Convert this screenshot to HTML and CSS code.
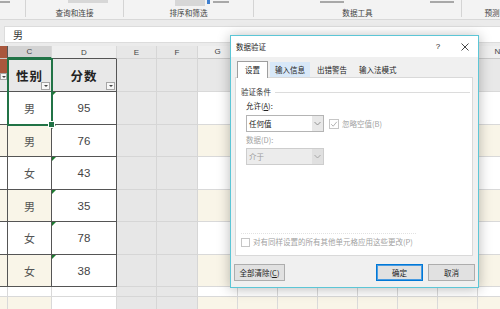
FILE: index.html
```html
<!DOCTYPE html>
<html lang="zh-CN">
<head>
    <meta charset="UTF-8">
    <meta name="viewport" content="width=device-width, initial-scale=1.0">
    <title>数据验证</title>
    <link rel="stylesheet" href="styles.css">
</head>
<body>
    <!-- ribbon, only the bottom edge is visible -->
    <div class="ribbon">
        <div class="group g0">
            <div class="tools"><span class="bar f0"></span></div>
        </div>
        <div class="group g1">
            <div class="tools"><span class="chip chip1"></span></div>
            <p class="glabel">查询和连接</p>
        </div>
        <div class="group g2">
            <div class="tools"><span class="chip chip2"></span><span class="adv-icon"></span><span class="bar f2"></span></div>
            <p class="glabel">排序和筛选</p>
        </div>
        <div class="group g3">
            <div class="tools"><span class="bar f3a"></span><span class="bar f3b"></span></div>
            <p class="glabel">数据工具</p>
        </div>
        <div class="group g4">
            <div class="tools"></div>
            <p class="glabel">预测</p>
        </div>
    </div>

    <div class="formula">
        <div class="fx-input">男</div>
    </div>

    <div class="sheet">
        <div class="row colhead">
            <div class="b"></div>
            <div class="c on">C</div>
            <div class="d">D</div>
            <div class="e">E</div>
            <div class="f">F</div>
            <div class="rest">
                <span>G</span><span></span><span></span><span></span><span></span><span></span><span></span><span>N</span>
            </div>
        </div>

        <div class="row th band-g">
            <div class="b t"><span class="flt bflt"></span></div>
            <div class="c t">性别<span class="flt"></span></div>
            <div class="d t">分数<span class="flt"></span></div>
            <div class="e"></div>
            <div class="f"></div>
            <div class="rest"></div>
        </div>

        <div class="row band-w h33">
            <div class="b t"></div>
            <div class="c t">男</div>
            <div class="d t tx">95</div>
            <div class="e"></div>
            <div class="f"></div>
            <div class="rest"></div>
        </div>
        <div class="row band-c h32">
            <div class="b t"></div>
            <div class="c t">男</div>
            <div class="d t tx">76</div>
            <div class="e"></div>
            <div class="f"></div>
            <div class="rest"></div>
        </div>
        <div class="row band-w h33">
            <div class="b t"></div>
            <div class="c t">女</div>
            <div class="d t tx">43</div>
            <div class="e"></div>
            <div class="f"></div>
            <div class="rest"></div>
        </div>
        <div class="row band-c h32">
            <div class="b t"></div>
            <div class="c t">男</div>
            <div class="d t tx">35</div>
            <div class="e"></div>
            <div class="f"></div>
            <div class="rest"></div>
        </div>
        <div class="row band-w h33">
            <div class="b t"></div>
            <div class="c t">女</div>
            <div class="d t tx">78</div>
            <div class="e"></div>
            <div class="f"></div>
            <div class="rest"></div>
        </div>
        <div class="row band-c h32">
            <div class="b t"></div>
            <div class="c t">女</div>
            <div class="d t tx">38</div>
            <div class="e"></div>
            <div class="f"></div>
            <div class="rest"></div>
        </div>

        <div class="row band-w short">
            <div class="b"></div>
            <div class="c"></div>
            <div class="d"></div>
            <div class="e"></div>
            <div class="f"></div>
            <div class="rest"></div>
        </div>
        <div class="row band-c last">
            <div class="b"></div>
            <div class="c"></div>
            <div class="d"></div>
            <div class="e"></div>
            <div class="f"></div>
            <div class="rest"></div>
        </div>

        <!-- selected range C1:C2 -->
        <div class="selbox"></div>
    </div>

    <!-- data validation dialog -->
    <div class="dlg">
        <div class="dlg-title">
            <span class="dlg-name">数据验证</span>
            <span class="help">?</span>
            <span class="close">
                <svg width="8" height="8" viewBox="0 0 8 8"><path d="M0.5 0.5 L7.5 7.5 M7.5 0.5 L0.5 7.5" stroke="#333" stroke-width="0.9" fill="none"/></svg>
            </span>
        </div>

        <div class="dlg-body">
            <div class="tabs">
                <span class="tab on">设置</span>
                <span class="tab hover">输入信息</span>
                <span class="tab">出错警告</span>
                <span class="tab">输入法模式</span>
            </div>

            <div class="panel">
                <div class="legend">验证条件</div>

                <div class="lbl">允许(<u>A</u>):</div>
                <div class="line">
                    <div class="sel">
                        <span>任何值</span>
                        <i class="arr"><svg width="7" height="5" viewBox="0 0 7 5"><path d="M0.5 1 L3.5 4 L6.5 1" stroke="#8a8a8a" stroke-width="0.9" fill="none"/></svg></i>
                    </div>
                    <div class="chk off">
                        <span class="box"><svg width="8" height="8" viewBox="0 0 8 8"><path d="M1.2 4.2 L3.2 6.2 L6.8 1.8" stroke="#b4b4b4" stroke-width="1" fill="none"/></svg></span>
                        忽略空值(B)
                    </div>
                </div>

                <div class="lbl off">数据(D):</div>
                <div class="sel dis">
                    <span>介于</span>
                    <i class="arr"><svg width="7" height="5" viewBox="0 0 7 5"><path d="M0.5 1 L3.5 4 L6.5 1" stroke="#a0a0a0" stroke-width="0.9" fill="none"/></svg></i>
                </div>

                <div class="apply">
                    <div class="chk off"><span class="box small"></span>对有同样设置的所有其他单元格应用这些更改(P)</div>
                </div>
            </div>

            <div class="foot">
                <button class="btn">全部清除(<u>C</u>)</button>
                <span class="grow"></span>
                <button class="btn primary">确定</button>
                <button class="btn">取消</button>
            </div>
        </div>
    </div>
</body>
</html>
```

FILE: styles.css
```css
*{
    margin: 0;
    padding: 0;
}
body{
    width: 500px;
    height: 309px;
    overflow: hidden;
    position: relative;
    background-color: #fff;
    font-family: "Noto Sans CJK SC", "Liberation Sans", sans-serif;
    color: #333;
}

/* ribbon */
.ribbon{
    height: 19px;
    display: flex;
    overflow: hidden;
    background-color: #f3f3f3;
    border-bottom: 1px solid #d8d8d8;
}
.group{
    flex: none;
    height: 17px;
    box-sizing: border-box;
    border-right: 1px solid #d4d4d4;
    display: flex;
    flex-direction: column;
}
.g0{ width: 26px; }
.g1{ width: 98px; }
.g2{ width: 130px; }
.g3{ width: 208px; }
.g4{ width: 60px; border-right: none; }
.tools{
    height: 9px;
    display: flex;
    align-items: flex-start;
    overflow: hidden;
}
.glabel{
    font-size: 7.6px;
    line-height: 8px;
    color: #444;
    text-align: center;
    white-space: nowrap;
}
/* cut-off ribbon captions, drawn as grey strokes */
.bar{
    display: block;
    height: 2px;
    margin-top: 1px;
    background-color: #a8a8a8;
}
.f0{ width: 10px; }
.f2{ width: 16px; }
.f3a{ margin-left: 66px; width: 24px; }
.f3b{ margin-left: 86px; width: 24px; }
.chip{
    display: block;
    background-color: #d7d7d7;
}
.chip1{
    margin-left: 42px;
    width: 40px;
    height: 3px;
}
.chip2{
    margin-left: 51px;
    width: 30px;
    height: 6px;
}
.adv-icon{
    width: 3px;
    height: 4px;
    margin: 0 3px 0 2px;
    background-color: #3f7fcf;
}

/* formula bar */
.formula{
    height: 26px;
    box-sizing: border-box;
    padding: 6px 0 0 4px;
    background-color: #ebebeb;
}
.fx-input{
    height: 17px;
    box-sizing: border-box;
    background-color: #fff;
    border: 1px solid #dcdcdc;
    border-right: none;
    padding-left: 8px;
    font-size: 10px;
    line-height: 15px;
    color: #333;
}

/* sheet */
.sheet{
    position: relative;
}
.row{
    display: grid;
    grid-template-columns: 8px 44px 65px 40px 41px 1fr;
    height: 33px;
}
.row > div{
    position: relative;
    box-sizing: border-box;
    border-right: 1px solid #d9d9d9;
    border-bottom: 1px solid #d9d9d9;
    display: flex;
    align-items: center;
    justify-content: center;
    white-space: nowrap;
}
.h33{ height: 33px; }
.h32{ height: 32px; }
.short{ height: 10px; }
.last{ height: 20px; }

.colhead{
    height: 13px;
}
.colhead > div{
    background-color: #efefef;
    border-bottom-color: #c9c9c9;
    font-family: "Liberation Sans", sans-serif;
    font-size: 8px;
    color: #444;
}
.colhead .b{
    background-color: #a9573d;
    border-right-color: #555;
}
.colhead .c.on{
    background-color: #d3d3d3;
    border-bottom: 2px solid #217346;
}
.colhead .d{
    border-bottom-color: #555;
}
.colhead .rest{
    justify-content: flex-start;
    background-image: none;
}
.colhead .rest span{
    flex: none;
    width: 40px;
    height: 100%;
    box-sizing: border-box;
    border-right: 1px solid #d4d4d4;
    text-align: center;
    line-height: 12px;
}

.band-w > div{ background-color: #fff; }
.band-c > div{ background-color: #f9f5e8; }
.band-g > div{ background-color: #e8e8e8; }

.row .rest{
    border-right: none;
    background-image: repeating-linear-gradient(90deg, transparent 0 39px, #dadada 39px 40px);
}
.row > .e, .row > .f{
    background-color: #e7e7e7;
    border-color: #d6d6d6;
}
.band-w > .d, .band-c > .d{
    background-color: #fff;
}

/* table cells */
.t{
    border-right-color: #555 !important;
    border-bottom-color: #555 !important;
    font-size: 11px;
    color: #555;
}
.th .t{
    font-size: 12.5px;
    font-weight: 700;
    color: #222;
    letter-spacing: 1px;
}
.th .b{
    background: linear-gradient(#a9573d 0 14px, #e8e8e8 14px);
}
.d.t{
    font-family: "Liberation Sans", sans-serif;
    font-size: 11.5px;
    color: #444;
}
.th .d.t{
    font-family: "Noto Sans CJK SC", sans-serif;
    font-size: 12.5px;
    color: #222;
}
.tx::before{
    content: "";
    position: absolute;
    left: 0;
    top: 0;
    border-top: 4px solid #1d7a31;
    border-right: 4px solid transparent;
}

.flt{
    position: absolute;
    right: 1px;
    bottom: 1px;
    width: 9px;
    height: 8px;
    box-sizing: border-box;
    border: 1px solid #a6a6a6;
    background-color: #f7f7f7;
}
.flt::after{
    content: "";
    position: absolute;
    left: 2px;
    top: 2px;
    border-left: 2px solid transparent;
    border-right: 2px solid transparent;
    border-top: 2px solid #444;
}
.bflt{
    top: 14px;
    bottom: auto;
    right: 0;
    width: 7px;
    height: 7px;
}
.bflt::after{
    left: 1px;
}

.selbox{
    position: absolute;
    left: 7px;
    top: 12px;
    width: 46px;
    height: 68px;
    box-sizing: border-box;
    border: 2px solid #217346;
    pointer-events: none;
}
.selbox::after{
    content: "";
    position: absolute;
    right: -4px;
    bottom: -4px;
    width: 5px;
    height: 5px;
    background-color: #217346;
    border: 1px solid #fff;
}

/* dialog */
.dlg{
    position: absolute;
    left: 230px;
    top: 35px;
    width: 249px;
    height: 253px;
    box-sizing: border-box;
    border: 1px solid #5cc6d6;
    background-color: #f0f0f0;
    box-shadow: 0 1px 12px rgba(0, 0, 0, 0.28);
    display: flex;
    flex-direction: column;
    font-size: 7.5px;
    color: #222;
}
.dlg-title{
    height: 21px;
    flex: none;
    display: flex;
    align-items: center;
    background-color: #fff;
    padding-left: 5px;
}
.help{
    margin-left: auto;
    width: 20px;
    text-align: center;
    font-family: "Liberation Sans", sans-serif;
    font-size: 8px;
}
.close{
    width: 26px;
    margin-left: 4px;
    display: flex;
    justify-content: center;
}
.dlg-body{
    flex: 1;
    display: flex;
    flex-direction: column;
    padding: 4px 5px 6px 4px;
}

.tabs{
    height: 16px;
    flex: none;
    display: flex;
    align-items: flex-end;
    gap: 2px;
    padding-left: 2px;
}
.tab{
    height: 15px;
    box-sizing: border-box;
    padding: 0 5px;
    line-height: 15px;
    white-space: nowrap;
}
.tab.on{
    position: relative;
    z-index: 1;
    height: 17px;
    margin-bottom: -1px;
    padding: 0 7px;
    background-color: #fff;
    border: 1px solid #9e9e9e;
    border-bottom: none;
    line-height: 15px;
}
.tab.hover{
    background-color: #d8e8f8;
}

.panel{
    flex: 1;
    display: flex;
    flex-direction: column;
    background-color: #fff;
    border: 1px solid #d9d9d9;
}
.legend{
    margin-top: 9px;
    padding-left: 5px;
    line-height: 10px;
    display: flex;
    align-items: center;
    color: #333;
}
.legend::after{
    content: "";
    flex: 1;
    height: 1px;
    margin: 0 2px 0 4px;
    background-color: #dcdcdc;
}
.lbl{
    margin: 4px 0 0 10px;
    line-height: 10px;
}
.lbl u, .btn u{
    text-decoration: underline;
}
.off{
    color: #a2a2a2;
}
.line{
    display: flex;
    align-items: center;
    margin-top: 4px;
}
.sel{
    width: 78px;
    height: 17px;
    box-sizing: border-box;
    margin-left: 10px;
    display: flex;
    border: 1px solid #b4b4b4;
    background-color: #fff;
    line-height: 15px;
}
.line .sel{
    margin-top: 0;
}
.sel span{
    flex: 1;
    padding-left: 2px;
}
.sel .arr{
    width: 11px;
    display: flex;
    align-items: center;
    justify-content: center;
    background-color: #e8e8e8;
}
.sel.dis{
    margin-top: 3px;
    background-color: #ececec;
    border-color: #cdcdcd;
    color: #9c9c9c;
}
.sel.dis .arr{
    background-color: #e0e0e0;
}
.lbl.off{
    margin-top: 3px;
}
.chk{
    display: flex;
    align-items: center;
    gap: 3px;
    line-height: 10px;
    white-space: nowrap;
}
.line .chk{
    margin-left: 5px;
}
.box{
    width: 8px;
    height: 8px;
    display: flex;
    border: 1px solid #c6c6c6;
    background-color: #fff;
}
.box.small{
    width: 7px;
    height: 7px;
}
.apply{
    margin: auto 0 0 5px;
    width: 175px;
    padding: 3px 0 8px;
    border-top: 1px dotted #e2e2e2;
}

.foot{
    flex: none;
    display: flex;
    gap: 5px;
    margin: 8px -2px 0 -1px;
}
.grow{
    flex: 1;
}
.btn{
    height: 17px;
    width: 47px;
    box-sizing: border-box;
    border: 1px solid #adadad;
    background-color: #e1e1e1;
    font-family: "Noto Sans CJK SC", sans-serif;
    font-size: 7.5px;
    color: #222;
}
.btn:first-child{
    width: 51px;
}
.primary{
    border-color: #0078d7;
    box-shadow: inset 0 0 0 1px #4a9be0;
}
```
